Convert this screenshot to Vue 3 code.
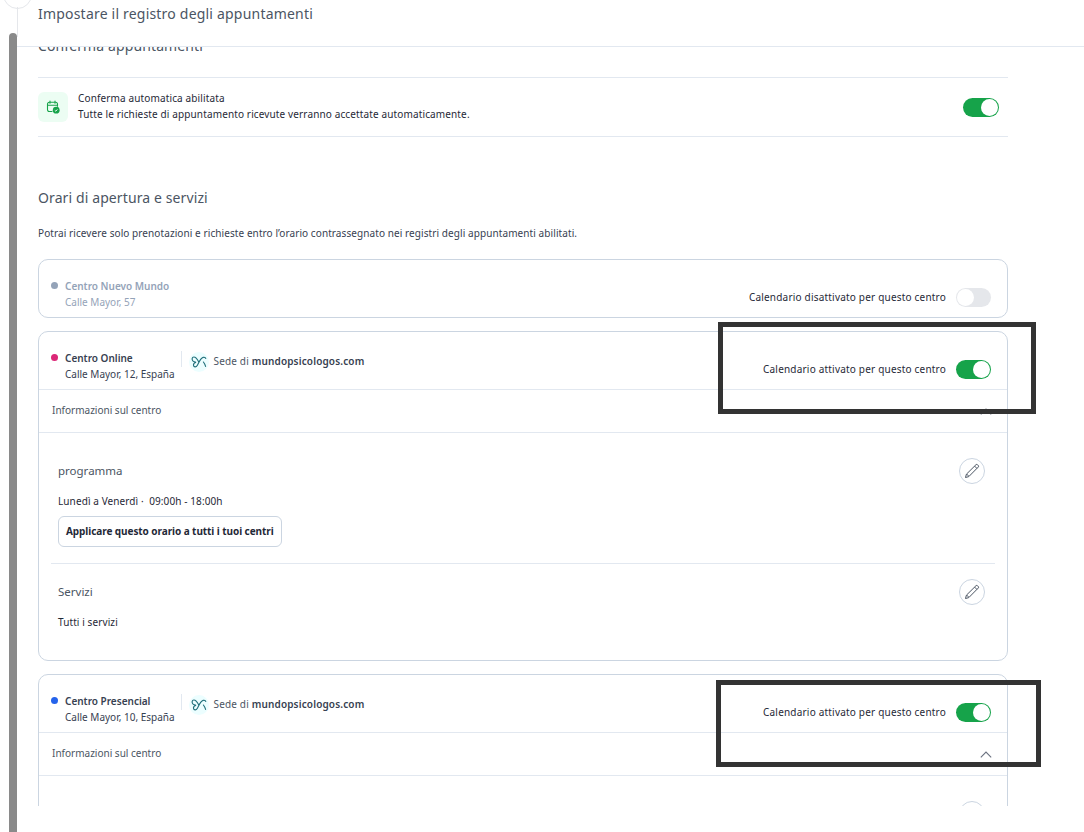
<template>
  <div class="page">
    <div class="step-circle"></div>
    <div class="step-line"></div>
    <div class="scrollbar"></div>

    <header class="top">Impostare il registro degli appuntamenti</header>

    <main class="scroller">
      <div class="content">
        <h2 class="confirm-title">Conferma appuntamenti</h2>

        <div class="auto-row">
          <div class="auto-icon">
            <svg width="14" height="14" viewBox="0 0 14 14" fill="none">
              <path d="M6 11.5H3.2A1.7 1.7 0 0 1 1.5 9.8V4A1.7 1.7 0 0 1 3.2 2.3h6.6A1.7 1.7 0 0 1 11.5 4v2.2M1.5 5.2h10M4 1v2.2M9 1v2.2" stroke="#16a34a" stroke-width="1.1" stroke-linecap="round" />
              <circle cx="10.2" cy="10.2" r="3.4" fill="#16a34a" />
              <path d="M8.8 10.3l1 .9 1.6-1.8" stroke="#fff" stroke-width=".9" />
            </svg>
          </div>
          <div class="auto-text">
            <div>Conferma automatica abilitata</div>
            <div>Tutte le richieste di appuntamento ricevute verranno accettate automaticamente.</div>
          </div>
          <span class="toggle on"></span>
        </div>

        <h2 class="hours-title">Orari di apertura e servizi</h2>
        <p class="hours-note">Potrai ricevere solo prenotazioni e richieste entro l’orario contrassegnato nei registri degli appuntamenti abilitati.</p>

        <section class="card off">
          <div class="card-head">
            <span class="dot grey"></span>
            <div class="place">
              <div class="place-name">Centro Nuevo Mundo</div>
              <div class="place-addr">Calle Mayor, 57</div>
            </div>
            <div class="switch-wrap">
              <span class="switch-text">Calendario disattivato per questo centro</span>
              <span class="toggle"></span>
            </div>
          </div>
        </section>

        <section v-for="c in centers" :key="c.name" class="card" :class="c.cls">
          <div class="card-head">
            <span class="dot" :style="{ background: c.color }"></span>
            <div class="place">
              <div class="place-name">{{ c.name }}</div>
              <div class="place-addr">{{ c.addr }}</div>
            </div>
            <div class="site">
              <span class="butterfly">
                <svg width="16" height="13" viewBox="0 0 16 13" fill="none" stroke="#1f6f7a" stroke-width="1.1" stroke-linecap="round">
                  <path d="M7.8 6C6.6 3.6 4.6 1 2.8 1 1 1 .6 3.4 1.8 4.8c.9 1 2.2 1.3 3.3 1.4-1.5.4-2.9 1.5-2.6 3.2.3 1.9 2.7 2 3.7.2C7.6 7 9.4 2.2 12.2 1.4c1-.3 2 .2 2.6 1" />
                  <path d="M12.4 6c1 1.2 1.7 2.6 2.2 4.4" />
                </svg>
              </span>
              <span class="site-text">Sede di <b>mundopsicologos.com</b></span>
            </div>
            <div class="switch-wrap">
              <span class="switch-text">Calendario attivato per questo centro</span>
              <span class="toggle on"></span>
            </div>
          </div>

          <div class="info-row">
            <span class="info-text">Informazioni sul centro</span>
            <svg class="chevron" width="12" height="7" viewBox="0 0 12 7" fill="none">
              <path d="M.8 6.4L6 1l5.2 5.4" stroke="#6b7280" stroke-width="1.1" />
            </svg>
          </div>

          <div class="details">
            <div class="block first">
              <div class="block-title">
                <span class="title-text">programma</span>
                <button class="edit" aria-label="modifica">
                  <svg width="18" height="18" viewBox="0 0 18 18" fill="none" stroke="#4b5563" stroke-width="1">
                    <path d="M2.5 15.5l.9-3.3L12.9 2.8a1.2 1.2 0 0 1 1.7 0l.6.6a1.2 1.2 0 0 1 0 1.7L5.8 14.6z" />
                    <path d="M3.6 12l2 2M11.6 4.1l2.2 2.2" />
                  </svg>
                </button>
              </div>
              <div class="block-line">Lunedì a Venerdì ·&nbsp; 09:00h - 18:00h</div>
              <button class="apply">Applicare questo orario a tutti i tuoi centri</button>
            </div>
            <div class="block">
              <div class="block-title">
                <span class="title-text">Servizi</span>
                <button class="edit" aria-label="modifica">
                  <svg width="18" height="18" viewBox="0 0 18 18" fill="none" stroke="#4b5563" stroke-width="1">
                    <path d="M2.5 15.5l.9-3.3L12.9 2.8a1.2 1.2 0 0 1 1.7 0l.6.6a1.2 1.2 0 0 1 0 1.7L5.8 14.6z" />
                    <path d="M3.6 12l2 2M11.6 4.1l2.2 2.2" />
                  </svg>
                </button>
              </div>
              <div class="block-line">Tutti i servizi</div>
            </div>
          </div>
        </section>
      </div>
    </main>

    <div class="mark mark-one"></div>
    <div class="mark mark-two"></div>
  </div>
</template>

<script setup>
const centers = [
  { name: 'Centro Online', addr: 'Calle Mayor, 12, España', color: '#db2777', cls: 'online' },
  { name: 'Centro Presencial', addr: 'Calle Mayor, 10, España', color: '#2563eb', cls: 'presencial' },
]
</script>

<style>
html,
body {
  margin: 0;
  background: #fff;
}
</style>

<style scoped>
.page {
  position: relative;
  width: 1084px;
  height: 832px;
  overflow: hidden;
  padding-left: 38px;
  box-sizing: border-box;
  font-family: "Noto Sans", sans-serif;
  color: #374151;
  background: #fff;
}
.step-circle {
  position: absolute;
  left: 3px;
  top: -20px;
  width: 27px;
  height: 27px;
  border: 1px solid #e5e7eb;
  border-radius: 50%;
  background: #fff;
}
.step-line {
  position: absolute;
  left: 17px;
  top: 7px;
  width: 1px;
  height: 30px;
  background: #e5e7eb;
}
.scrollbar {
  position: absolute;
  left: 9px;
  top: 33px;
  width: 8px;
  height: 799px;
  border-radius: 4px 4px 0 0;
  background: #8a8a8a;
}
.top {
  height: 47px;
  margin-left: -21px;
  padding: 5px 0 0 21px;
  box-sizing: border-box;
  border-bottom: 1px solid #e2e8f0;
  font-size: 14px;
  line-height: 18px;
  letter-spacing: .2px;
  color: #4b5563;
}
.scroller {
  width: 970px;
  height: 759px;
  overflow: hidden;
}
.content {
  margin-top: -10px;
}
.confirm-title {
  height: 40px;
  margin: 0;
  font-size: 14px;
  font-weight: 400;
  line-height: 18px;
  letter-spacing: .11px;
  color: #4b5563;
}
.auto-row {
  display: flex;
  align-items: center;
  height: 60px;
  box-sizing: border-box;
  border-top: 1px solid #e2e8f0;
  border-bottom: 1px solid #e2e8f0;
}
.auto-icon {
  display: flex;
  align-items: center;
  justify-content: center;
  width: 30px;
  height: 30px;
  border-radius: 6px;
  background: #ecfdf3;
}
.auto-text {
  flex: 1;
  margin-left: 10px;
  padding-bottom: 2px;
  font-size: 10px;
  line-height: 16px;
  letter-spacing: .13px;
  color: #1f2937;
}
.auto-row .toggle {
  width: 36px;
  margin-right: 9px;
}
.toggle {
  position: relative;
  display: inline-block;
  flex: none;
  width: 35px;
  height: 19px;
  border-radius: 10px;
  background: #e5e7eb;
}
.toggle::after {
  content: "";
  position: absolute;
  left: 1px;
  top: 1px;
  width: 17px;
  height: 17px;
  border-radius: 50%;
  background: #fff;
}
.toggle.on {
  background: #16a34a;
}
.toggle.on::after {
  left: auto;
  right: 1px;
}
.hours-title {
  margin: 51px 0 0;
  font-size: 14px;
  font-weight: 400;
  line-height: 20px;
  letter-spacing: .11px;
  color: #4b5563;
}
.hours-note {
  margin: 18px 0 19px;
  font-size: 10px;
  line-height: 14px;
  letter-spacing: .085px;
  color: #374151;
}
.card {
  margin-bottom: 13px;
  box-sizing: border-box;
  border: 1px solid #cbd5e1;
  border-radius: 10px;
  font-size: 10px;
}
.card-head {
  display: flex;
  height: 57px;
  padding: 18px 16px 0 12px;
  box-sizing: border-box;
}
.dot {
  flex: none;
  width: 7px;
  height: 7px;
  margin-top: 4px;
  margin-right: 7px;
  border-radius: 50%;
}
.dot.grey {
  background: #94a3b8;
}
.place {
  line-height: 16px;
  white-space: nowrap;
  color: #374151;
}
.place-name {
  font-weight: 600;
}
.off .place {
  color: #94a3b8;
}
.site {
  display: flex;
  align-items: center;
  align-self: flex-start;
  gap: 5px;
  height: 16px;
  margin-top: 1px;
  margin-left: 6px;
  padding-left: 7px;
  border-left: 1px solid #e2e8f0;
  letter-spacing: .15px;
  white-space: nowrap;
  color: #4b5563;
}
.butterfly {
  display: flex;
  align-items: center;
  justify-content: center;
  width: 20px;
  height: 20px;
  margin-top: 6px;
  border-radius: 50%;
  background: #ecfeff;
}
.site-text {
  margin-top: 3px;
}
.site b {
  font-weight: 600;
  color: #374151;
}
.switch-wrap {
  display: flex;
  align-items: center;
  gap: 10px;
  height: 19px;
  margin-top: 10px;
  margin-left: auto;
  letter-spacing: .2px;
  color: #1f2937;
}
.switch-text {
  margin-bottom: 2px;
}
.info-row {
  display: flex;
  align-items: center;
  justify-content: space-between;
  height: 44px;
  padding: 0 15px 0 13px;
  box-sizing: border-box;
  border-top: 1px solid #e2e8f0;
  border-bottom: 1px solid #e2e8f0;
  color: #4b5563;
}
.info-text {
  margin-bottom: 2px;
}
.details {
  padding: 0 12px;
}
.block {
  padding: 15px 7px 31px;
}
.block.first {
  padding: 25px 7px 16px;
  border-bottom: 1px solid #e2e8f0;
}
.block-title {
  display: flex;
  align-items: center;
  justify-content: space-between;
  height: 26px;
  padding-right: 3px;
  font-size: 11.5px;
  color: #4b5563;
}
.title-text {
  margin-bottom: 2px;
}
.edit {
  display: flex;
  align-items: center;
  justify-content: center;
  width: 26px;
  height: 26px;
  padding: 0;
  border: 1px solid #cbd5e1;
  border-radius: 50%;
  background: #fff;
}
.block-line {
  margin-top: 10px;
  line-height: 14px;
  letter-spacing: .1px;
  color: #1f2937;
}
.apply {
  display: block;
  height: 31px;
  margin-top: 8px;
  padding: 0 7px 2px;
  border: 1px solid #cbd5e1;
  border-radius: 6px;
  background: #fff;
  font-family: inherit;
  font-size: 10px;
  font-weight: 700;
  letter-spacing: -.07px;
  color: #1f2937;
}
.mark {
  position: absolute;
  box-sizing: border-box;
  border: 5px solid #333;
}
.mark-one {
  left: 718px;
  top: 322px;
  width: 318px;
  height: 92px;
}
.mark-two {
  left: 716px;
  top: 680px;
  width: 325px;
  height: 87px;
}
</style>
